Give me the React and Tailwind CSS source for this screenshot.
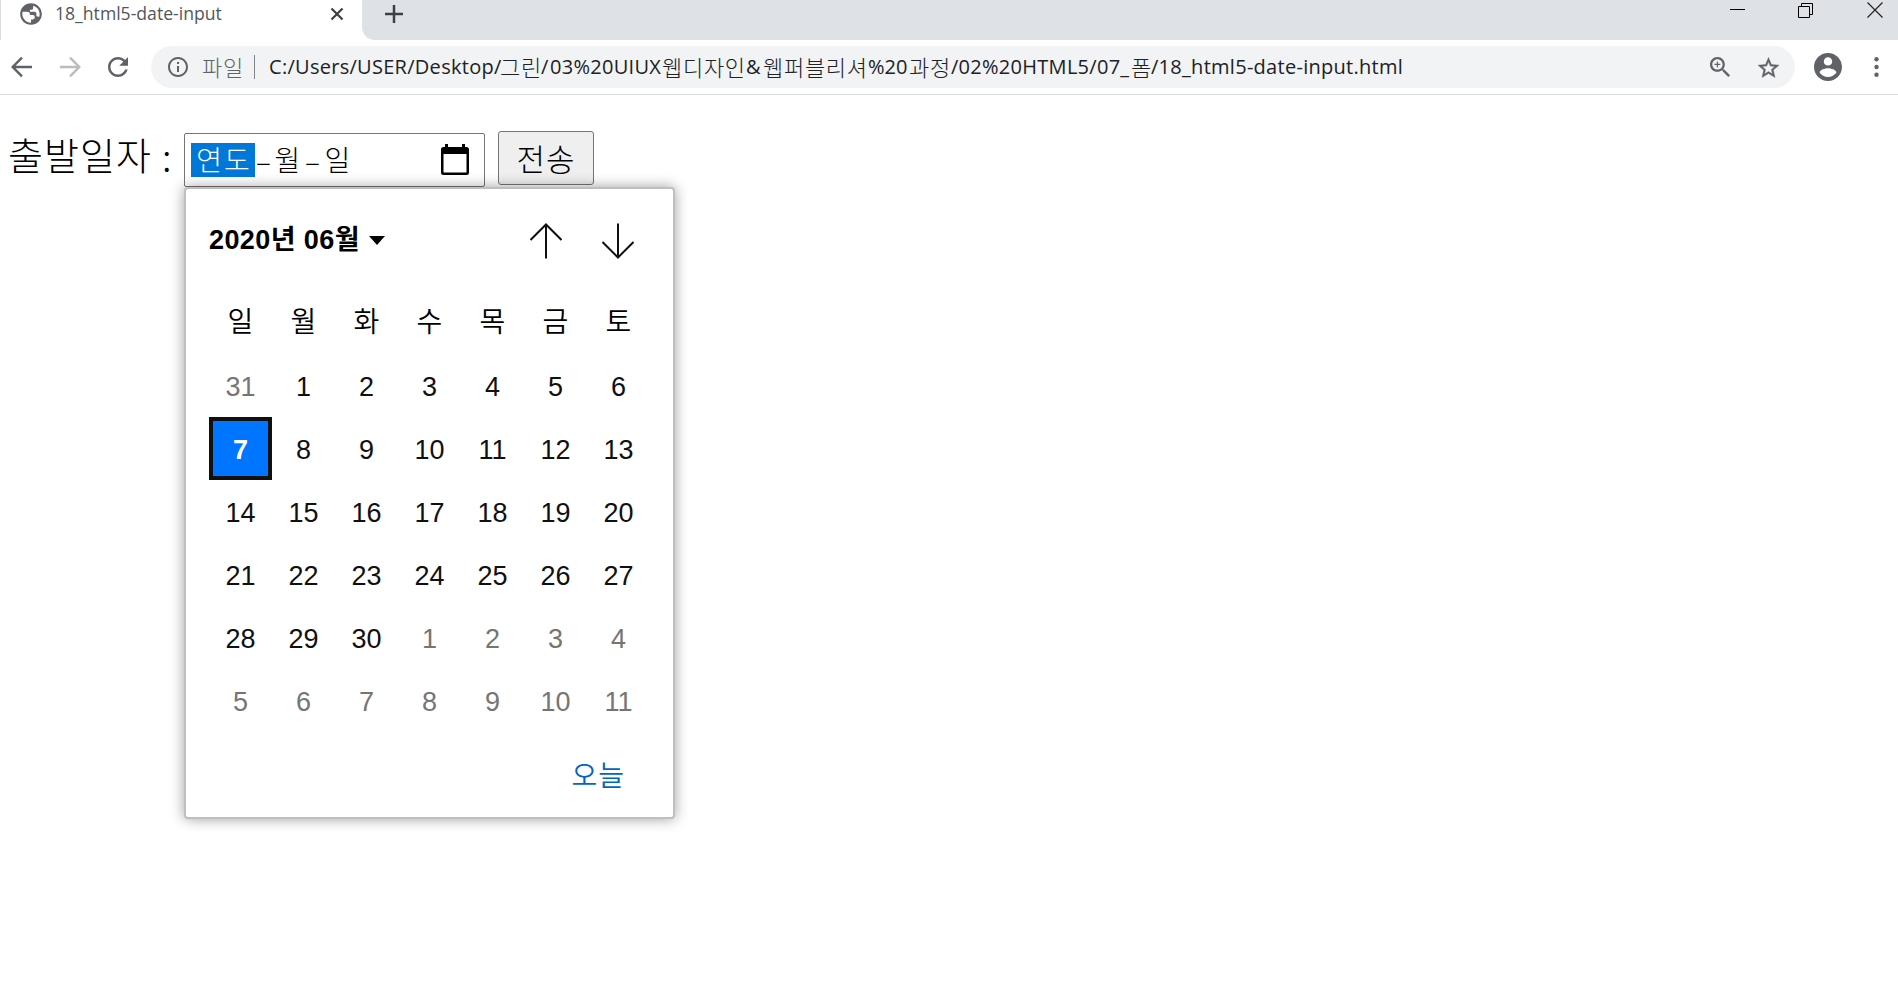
const LATIN = "font-['Open_Sans','Noto_Sans_CJK_KR',sans-serif] font-normal";
const KR = "font-['Noto_Sans_CJK_KR',sans-serif] font-light";
const ARIAL = "font-['Liberation_Sans','Noto_Sans_CJK_KR',sans-serif]";

const DAY_NAMES = ["일", "월", "화", "수", "목", "금", "토"];
const DAYS = [
  31, ...Array.from({ length: 30 }, (_, i) => i + 1), ...Array.from({ length: 11 }, (_, i) => i + 1),
];

function GlobeIcon() {
  return (
    <svg className="h-[26px] w-[26px] shrink-0" viewBox="0 0 24 24" fill="#5f6368">
      <path d="M12 2C6.48 2 2 6.48 2 12s4.480 10 10 10 10-4.480 10-10S17.520 2 12 2zm-8 9.500c.1-.6.200-1 .3-1.500h4.200c1.500 0 2.500 1 2.500 2v1h2.500c1.300 0 2 .8 2 2s-.8 2-2 2H12v3c-4.400 0-8-3.600-8-8zm15.500 3.200c-.8-.5-1.500-.7-2.500-.7v-2c0-1.300-.8-2-2-2h-4V8h1.500c1 0 1.500-.6 1.500-1.500V4.300c3.500.9 6 4.100 6 7.700 0 1-.2 1.900-.5 2.700z" />
    </svg>
  );
}

function TabStrip() {
  return (
    <div className="flex h-10 bg-[#dee1e6]">
      <div className="flex h-10 w-[362px] items-start border-l border-[#dadce0] bg-white pl-[17px] pt-px">
        <GlobeIcon />
        <span className={`${LATIN} ml-[11px] w-[263px] whitespace-nowrap text-[17.6px] leading-[25px] text-[#53565a]`}>
          18_html5-date-input
        </span>
        <svg className="ml-[12px] mt-[6px] h-[14px] w-[14px]" viewBox="0 0 14 14" stroke="#3c4043" strokeWidth="2.200">
          <path d="M1.500 1.500l11 11M12.500 1.500l-11 11" />
        </svg>
      </div>
      <div className="flex h-10 w-4 bg-white">
        <div className="h-10 w-4 rounded-bl-[13px] bg-[#dee1e6]" />
      </div>
      <svg className="ml-[7px] mt-[5px] h-[18px] w-[18px]" viewBox="0 0 18 18" stroke="#3c4043" strokeWidth="2.500">
        <path d="M9 0v18M0 9h18" />
      </svg>
      <div className="ml-auto flex pr-[15px] pt-[2px]">
        <svg className="h-4 w-4" viewBox="0 0 16 16" stroke="#000">
          <path d="M0 7.500h15" />
        </svg>
        <svg className="ml-[52px] h-4 w-4" viewBox="0 0 16 16" fill="none" stroke="#000">
          <path d="M.5 4.500h11v11H.5zM3.500 4.500v-3h11v11h-3" />
        </svg>
        <svg className="ml-[53px] h-4 w-4" viewBox="0 0 16 16" stroke="#222" strokeWidth="1.200">
          <path d="M.5.500l15 15M15.500.500l-15 15" />
        </svg>
      </div>
    </div>
  );
}

function Url() {
  const kr = `${KR} text-[22px] leading-[40px] tracking-[0.7px]`;
  return (
    <div className={`${LATIN} flex whitespace-pre text-[20px] leading-[42px] tracking-[0.28px] text-[#202124]`}>
      <span className="w-[231px]">C:/Users/USER/Desktop/</span>
      <span className={`${kr} w-[41px]`}>그린</span>
      <span className="w-[9px]">/</span>
      <span className="w-[112px]">03%20UIUX</span>
      <span className={`${kr} w-[84px]`}>웹디자인</span>
      <span className="w-[17px]">&amp;</span>
      <span className={`${kr} w-[105px]`}>웹퍼블리셔</span>
      <span className="w-[41px] tracking-[0px]">%20</span>
      <span className={`${kr} w-[42px]`}>과정</span>
      <span className="w-[180px]">/02%20HTML5/07_</span>
      <span className={`${kr} w-[20px]`}>폼</span>
      <span>/18_html5-date-input.html</span>
    </div>
  );
}

function Toolbar() {
  return (
    <div className="flex h-[55px] items-center border-b border-[#dadce0] bg-white">
      <svg className="ml-[11px] h-[22px] w-[22px]" viewBox="0 0 22 22" fill="none" stroke="#5f6368" strokeWidth="2.400">
        <path d="M21 11H2.500M11 1.700L1.700 11l9.300 9.300" />
      </svg>
      <svg className="ml-[26px] h-[22px] w-[22px]" viewBox="0 0 22 22" fill="none" stroke="#babcbe" strokeWidth="2.400">
        <path d="M1 11h18.500M11 1.700l9.300 9.300-9.300 9.300" />
      </svg>
      <svg className="ml-[27px] h-[20px] w-[20px]" viewBox="4 4 16 16" fill="#5f6368">
        <path d="M17.650 6.350C16.200 4.900 14.210 4 12 4c-4.420 0-7.990 3.580-7.990 8s3.570 8 7.990 8c3.730 0 6.840-2.550 7.730-6h-2.080c-.82 2.330-3.040 4-5.650 4-3.310 0-6-2.690-6-6s2.690-6 6-6c1.660 0 3.140.69 4.220 1.780L13 11h7V4l-2.350 2.350z" />
      </svg>
      <div className="ml-[23px] flex h-[42px] w-[1644px] items-center rounded-full bg-[#f1f3f4]">
        <svg className="ml-[17px] h-[20px] w-[20px]" viewBox="2 2 20 20" fill="#5f6368">
          <path d="M11 7h2v2h-2zm0 4h2v6h-2zm1-9C6.480 2 2 6.480 2 12s4.480 10 10 10 10-4.480 10-10S17.520 2 12 2zm0 18c-4.410 0-8-3.590-8-8s3.590-8 8-8 8 3.590 8 8-3.590 8-8 8z" />
        </svg>
        <span className={`${KR} ml-[14px] w-[52px] whitespace-nowrap pb-[2px] text-[22px] leading-[40px] tracking-[0.7px] text-[#5f6368]`}>파일</span>
        <div className="mr-[14px] h-[24px] w-px bg-[#80868b]" />
        <Url />
        <svg className="ml-auto h-[20px] w-[20px]" viewBox="3 3 17.500 17.500" fill="#5f6368">
          <path d="M15.500 14h-.79l-.28-.27C15.410 12.590 16 11.110 16 9.500 16 5.910 13.090 3 9.500 3S3 5.910 3 9.500 5.910 16 9.500 16c1.610 0 3.090-.59 4.230-1.570l.27.28v.79l5 4.990L20.490 19l-4.990-5zm-6 0C7.010 14 5 11.990 5 9.500S7.010 5 9.500 5 14 7.010 14 9.500 11.990 14 9.500 14zm.5-7H9v2H7v1h2v2h1v-2h2V9h-2z" />
        </svg>
        <svg className="ml-[28px] mr-[16px] h-[21px] w-[21px]" viewBox="2 2 20 19" fill="#5f6368" stroke="#5f6368" strokeWidth="0.400">
          <path d="M22 9.240l-7.190-.62L12 2 9.190 8.630 2 9.240l5.460 4.730L5.820 21 12 17.270 18.180 21l-1.630-7.030L22 9.240zM12 15.400l-3.760 2.270 1-4.280-3.320-2.880 4.380-.38L12 6.100l1.710 4.040 4.380.38-3.320 2.880 1 4.280L12 15.400z" />
        </svg>
      </div>
      <svg className="ml-[19px] h-[28px] w-[28px]" viewBox="2 2 20 20" fill="#5f6368">
        <path d="M12 2C6.480 2 2 6.480 2 12s4.480 10 10 10 10-4.480 10-10S17.520 2 12 2zm0 3c1.660 0 3 1.340 3 3s-1.340 3-3 3-3-1.340-3-3 1.340-3 3-3zm0 14.200c-2.500 0-4.710-1.280-6-3.220.030-1.990 4-3.080 6-3.080 1.990 0 5.970 1.090 6 3.080-1.290 1.940-3.500 3.220-6 3.220z" />
      </svg>
      <svg className="ml-[32px] h-5 w-[5px]" viewBox="0 0 5 20" fill="#5f6368">
        <circle cx="2.500" cy="2.300" r="2.200" />
        <circle cx="2.500" cy="10" r="2.200" />
        <circle cx="2.500" cy="17.700" r="2.200" />
      </svg>
    </div>
  );
}

function Calendar() {
  return (
    <div className={`${ARIAL} absolute left-0 top-[54px] h-[632px] w-[491px] rounded-[4px] border-2 border-[#bfbfbf] bg-white text-black shadow-[0_0_14px_rgba(0,0,0,0.38)]`}>
      <div className="flex h-[103px] items-center pl-[23px]">
        <span className="w-[160px] whitespace-nowrap text-[27px] font-bold leading-none tracking-[0.4px]">2020년 06월</span>
        <svg className="h-[9px] w-[16px]" viewBox="0 0 16 9"><path d="M0 0h16L8 9z" /></svg>
        <svg className="ml-[145px] h-[36px] w-[32px]" viewBox="0 0 32 36" fill="none" stroke="#101010" strokeWidth="2">
          <path d="M16 35.500V1M.5 17L16 1.500 31.500 17" />
        </svg>
        <svg className="ml-[40px] h-[36px] w-[32px]" viewBox="0 0 32 36" fill="none" stroke="#101010" strokeWidth="2">
          <path d="M16 .5V35M.5 19L16 34.500 31.500 19" />
        </svg>
      </div>
      <div className="ml-[23px] grid w-[441px] grid-cols-7 text-center">
        {DAY_NAMES.map((name) => (
          <div key={name} className="h-[62px] text-[28px] font-[350] leading-[62px]">{name}</div>
        ))}
        {DAYS.map((day, i) => {
          if (i === 7) {
            return (
              <div key={i} className="h-[63px] border-4 border-[#101010] bg-[#0075ff] text-[27px] font-bold leading-[58px] text-white">{day}</div>
            );
          }
          const outside = i === 0 || i > 30;
          return (
            <div key={i} className={`h-[63px] text-[27px] leading-[66px] ${outside ? "text-[#757575]" : "text-[#101010]"}`}>{day}</div>
          );
        })}
      </div>
      <div className="flex justify-end pr-[48px] pt-[21px] text-[28px] font-[350] leading-[48px] tracking-[1px] text-[#0067c0]">오늘</div>
    </div>
  );
}

export default function App() {
  return (
    <div className="h-[998px] w-[1898px] overflow-hidden bg-white">
      <TabStrip />
      <Toolbar />
      <div className="flex items-start pl-[8px] pt-[36px]">
        <div className={`${KR} -mt-[3px] flex w-[176px] whitespace-nowrap text-[38px] leading-[52px] text-black`}>
          <span className="w-[154px] tracking-[1px]">출발일자</span>
          <span className="pt-[2px]">:</span>
        </div>
        <div className="relative z-10 mt-[2px]">
          <div className={`${KR} flex h-[54px] w-[301px] items-center rounded-[2px] border border-[#767676] bg-white pl-[6px] text-[28px] leading-[32px] text-black`}>
            <span className="flex h-[34px] w-[64px] justify-center bg-[#0078d7] pl-[2px] tracking-[2px] text-white">연도</span>
            <span className="w-[17px] text-center">–</span>
            <span className="w-[31px] pb-[2px] text-center">월</span>
            <span className="w-[19px] text-center">–</span>
            <span className="w-[31px] pb-[2px] text-center">일</span>
            <svg className="mb-[2px] ml-auto mr-[15px] h-[31px] w-[28px]" viewBox="0 0 28 31">
              <path fillRule="evenodd" d="M4 0h3v3h14V0h3v3h1.500A2.500 2.500 0 0 1 28 5.500v23a2.500 2.500 0 0 1-2.500 2.500h-23A2.500 2.500 0 0 1 0 28.500v-23A2.500 2.500 0 0 1 2.500 3H4zM2.500 10v18.500h23V10z" />
            </svg>
          </div>
          <Calendar />
        </div>
        <button className={`${KR} ml-[13px] h-[54px] w-[96px] rounded-[3px] border border-[#767676] bg-[#efefef] text-[31px] leading-[50px] tracking-[1px] text-black`}>전송</button>
      </div>
    </div>
  );
}
